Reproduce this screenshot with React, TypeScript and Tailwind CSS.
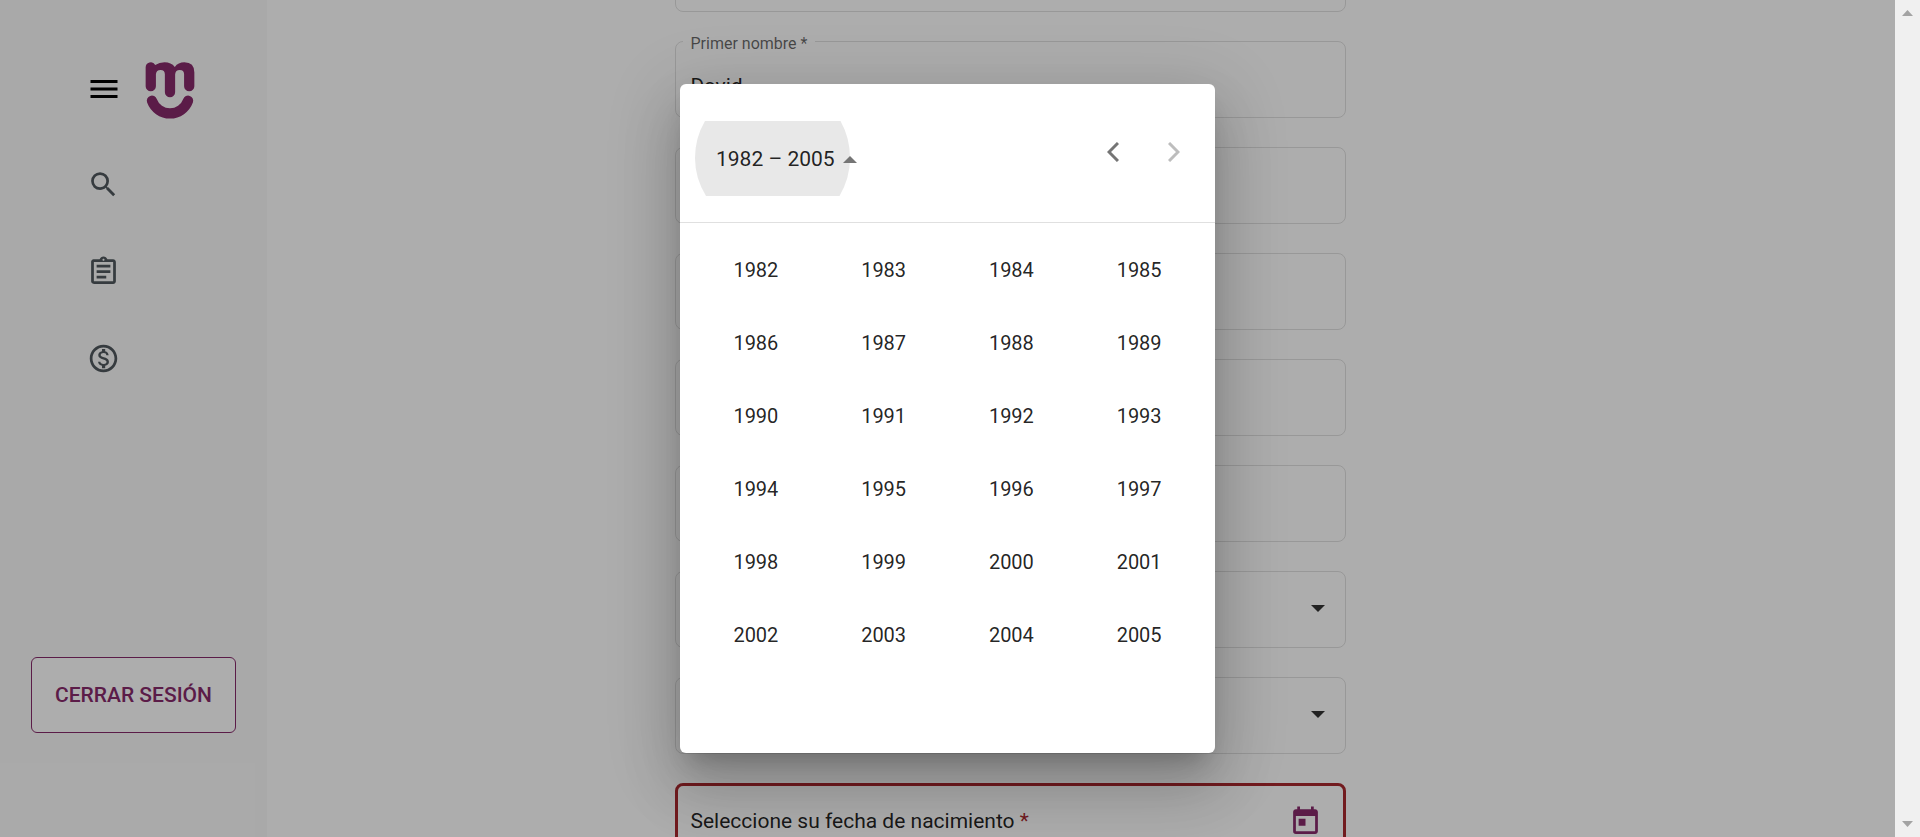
import React from "react";
import {
  MdMenu,
  MdSearch,
  MdOutlineAssignment,
  MdOutlineMonetizationOn,
  MdToday,
} from "react-icons/md";

const YEARS = Array.from({ length: 6 }, (_, row) =>
  Array.from({ length: 4 }, (_, col) => 1982 + row * 4 + col),
);

function Logo() {
  return (
    <svg viewBox="436 95 149 172" className="h-[57px] w-[50px]" role="img" aria-label="Inicio">
      <path
        d="M456 212A58 58 0 0 0 565 212"
        fill="none"
        stroke="#872a6b"
        strokeLinecap="round"
        strokeWidth="31"
      />
      <path
        fill="#872a6b"
        d="M437 112a15.500 15.500 0 0 1 29-8q12-8 28-8q20 0 31 14q10-14 29-14q30 0 30 31v41a15.500 15.500 0 0 1-31 0v-36q0-13-13-13t-14 13v54a15.500 15.500 0 0 1-31 0v-54q0-13-13-13t-14 13v36a15.500 15.500 0 0 1-31 0z"
      />
    </svg>
  );
}

function Sidebar() {
  return (
    <aside className="flex w-[267px] shrink-0 flex-col bg-[#fafafa]">
      <div className="flex items-start gap-[23px] pt-[62px] pl-[86px]">
        <button type="button" aria-label="Menú" className="mt-[9px] text-black">
          <MdMenu size={36} />
        </button>
        <Logo />
      </div>
      <nav className="mt-[49px] flex flex-col items-start gap-[54px] pl-[87px] text-[#50585d]">
        <a href="#buscar" aria-label="Buscar">
          <MdSearch size={33} />
        </a>
        <a href="#solicitudes" aria-label="Solicitudes">
          <MdOutlineAssignment size={33} />
        </a>
        <a href="#pagos" aria-label="Pagos">
          <MdOutlineMonetizationOn size={33} />
        </a>
      </nav>
      <button
        type="button"
        className="mx-[31px] mt-auto mb-[104px] h-[76px] rounded-md border border-[#872a6b] bg-white pt-0.5 text-[21px] font-medium text-[#872a6b]"
      >
        CERRAR SESIÓN
      </button>
    </aside>
  );
}

function TextField({ name, label, value }: { name: string; label?: string; value?: string }) {
  return (
    <label className="relative block">
      {label && (
        <span className="absolute -top-[7px] left-2 bg-white px-2 text-base leading-5 text-black/60">
          {label}
        </span>
      )}
      <input
        type="text"
        aria-label={name}
        defaultValue={value}
        className="block h-[77px] w-full rounded-lg border border-black/12 bg-transparent px-[15px] pt-3 text-[21px] text-black/87 outline-none"
      />
    </label>
  );
}

function SelectField({ name }: { name: string }) {
  return (
    <div className="relative">
      <select
        aria-label={name}
        className="block h-[77px] w-full appearance-none rounded-lg border border-black/12 bg-transparent px-4 text-[21px] outline-none"
      />
      <svg viewBox="0 0 14 7" className="pointer-events-none absolute top-[34px] right-[21px] h-[7px] w-3.5 fill-[#333]">
        <path d="M0 0h14l-7 7z" />
      </svg>
    </div>
  );
}

function Form() {
  return (
    <main className="flex flex-1 justify-center overflow-hidden bg-white pr-[142px]">
      <form className="-mt-[65px] flex w-[671px] shrink-0 flex-col gap-[29px]">
        <TextField name="Documento" />
        <TextField name="Primer nombre" label="Primer nombre *" value="David" />
        <TextField name="Segundo nombre" />
        <TextField name="Primer apellido" />
        <TextField name="Segundo apellido" />
        <TextField name="Correo" />
        <SelectField name="Género" />
        <SelectField name="Estado civil" />
        <div className="flex h-[77px] shrink-0 items-center justify-between rounded-lg border-3 border-[#a9292f] pr-[21px] pl-[13px]">
          <span className="text-[21px] text-black/87">
            Seleccione su fecha de nacimiento <span className="text-[#a9292f]">*</span>
          </span>
          <button type="button" aria-label="Abrir calendario" className="text-[#872a6b]">
            <MdToday size={33} />
          </button>
        </div>
      </form>
    </main>
  );
}

function YearPicker() {
  return (
    <div
      role="dialog"
      aria-label="Seleccionar año"
      className="h-[669px] w-[535px] rounded-md bg-white shadow-[0_16px_22px_-10px_rgba(0,0,0,.2),0_36px_57px_4px_rgba(0,0,0,.14),0_14px_69px_12px_rgba(0,0,0,.12)]"
    >
      <div className="flex h-[139px] items-start justify-between border-b border-black/12 pt-[37px] pr-[11px] pl-[15px]">
        <button type="button" className="relative flex h-[75px] items-center pt-0.5 pl-[21px] text-[21px] text-black/87">
          <svg viewBox="0 0 155 75" className="absolute top-0 left-0 h-[75px] w-[155px]">
            <path fill="#e8e8e8" d="M10 0H145.500Q155 17 155 37T144.500 75H11Q0 57 0 37T10 0z" />
          </svg>
          <span className="relative">1982 – 2005</span>
          <svg viewBox="0 0 14 7" className="relative ml-2 h-[7px] w-3.5 fill-[#757575]">
            <path d="M0 7h14l-7-7z" />
          </svg>
        </button>
        <div className="flex">
          <button type="button" aria-label="24 años anteriores" className="flex size-[61px] items-center justify-center">
            <svg viewBox="0 0 12 20" className="h-5 w-3" fill="none" stroke="#757575" strokeWidth="3">
              <path d="M11 1L2 10l9 9" />
            </svg>
          </button>
          <button type="button" disabled aria-label="24 años siguientes" className="flex size-[61px] items-center justify-center">
            <svg viewBox="0 0 12 20" className="h-5 w-3" fill="none" stroke="#bdbdbd" strokeWidth="3">
              <path d="M1 1l9 9-9 9" />
            </svg>
          </button>
        </div>
      </div>
      <div className="px-3 pt-2.5">
        <table className="w-full table-fixed">
          <tbody>
            {YEARS.map((row) => (
              <tr key={row[0]} className="h-[73px]">
                {row.map((year) => (
                  <td key={year} className="p-0 text-center">
                    <button type="button" className="text-[20px] text-black/87">
                      {year}
                    </button>
                  </td>
                ))}
              </tr>
            ))}
          </tbody>
        </table>
      </div>
    </div>
  );
}

function Scrollbar() {
  return (
    <div aria-hidden="true" className="flex w-[25px] shrink-0 flex-col items-center justify-between bg-[#f0f0f0] py-2.5">
      <svg viewBox="0 0 11 6" className="h-1.5 w-[11px] fill-[#a3a3a3]">
        <path d="M0 6h11L5.500 0z" />
      </svg>
      <svg viewBox="0 0 11 6" className="h-1.5 w-[11px] fill-[#a3a3a3]">
        <path d="M0 0h11L5.500 6z" />
      </svg>
    </div>
  );
}

export default function App() {
  return (
    <div className="flex h-screen overflow-hidden font-[Roboto,sans-serif]">
      <div className="relative flex min-w-0 flex-1 overflow-hidden">
        <Sidebar />
        <Form />
        <div className="absolute inset-0 flex items-center justify-center bg-black/32">
          <YearPicker />
        </div>
      </div>
      <Scrollbar />
    </div>
  );
}
